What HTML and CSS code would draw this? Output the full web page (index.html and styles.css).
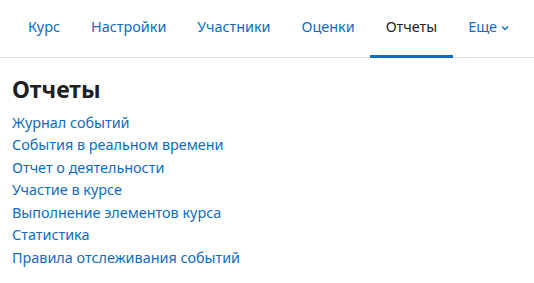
FILE: index.html
```html
<!DOCTYPE html>
<html lang="ru">
<head>
<meta charset="utf-8">
<title>Отчеты</title>
<link rel="stylesheet" href="styles.css">
</head>
<body>
<nav class="tabs">
  <a class="tab" href="#">Курс</a>
  <a class="tab" href="#">Настройки</a>
  <a class="tab" href="#">Участники</a>
  <a class="tab" href="#">Оценки</a>
  <a class="tab active" href="#">Отчеты</a>
  <a class="tab more" href="#">Еще<svg class="chev" width="8" height="6" viewBox="0 0 8 6"><path d="M1 1.5 L4 4.5 L7 1.5" fill="none" stroke="currentColor" stroke-width="1.4"/></svg></a>
</nav>
<main class="content">
  <h2 class="title">Отчеты</h2>
  <ul class="links">
    <li><a href="#">Журнал событий</a></li>
    <li><a href="#">События в реальном времени</a></li>
    <li><a href="#">Отчет о деятельности</a></li>
    <li><a href="#">Участие в курсе</a></li>
    <li><a href="#">Выполнение элементов курса</a></li>
    <li><a href="#">Статистика</a></li>
    <li><a href="#">Правила отслеживания событий</a></li>
  </ul>
</main>
</body>
</html>
```

FILE: styles.css
```css
* { box-sizing: border-box; }
html, body { margin: 0; padding: 0; background: #fff; }
body {
  font-family: "Noto Sans", "Open Sans", sans-serif;
  font-size: 14.4px;
  line-height: 22.5px;
  color: #1d2125;
}
a { color: #0f6cbf; text-decoration: none; }
.tabs {
  display: flex;
  padding-left: 12px;
  border-bottom: 1px solid #dee2e6;
  height: 58px;
}
.tab {
  display: flex;
  align-items: flex-start;
  padding: 16px 15.5px 0;
  height: 58px;
  margin-bottom: -1px;
  border-bottom: 3px solid transparent;
}
.tab:first-child { padding-left: 16px; }
.tab.active {
  color: #1d2125;
  border-bottom-color: #0f6cbf;
}
.chev { margin-left: 4px; margin-top: 9px; }
.content { padding: 0 12px; }
.title {
  margin: 16px 0 6px;
  font-size: 23px;
  line-height: 31.5px;
  font-weight: 700;
}
.links { list-style: none; margin: 0; padding: 0; }
```
